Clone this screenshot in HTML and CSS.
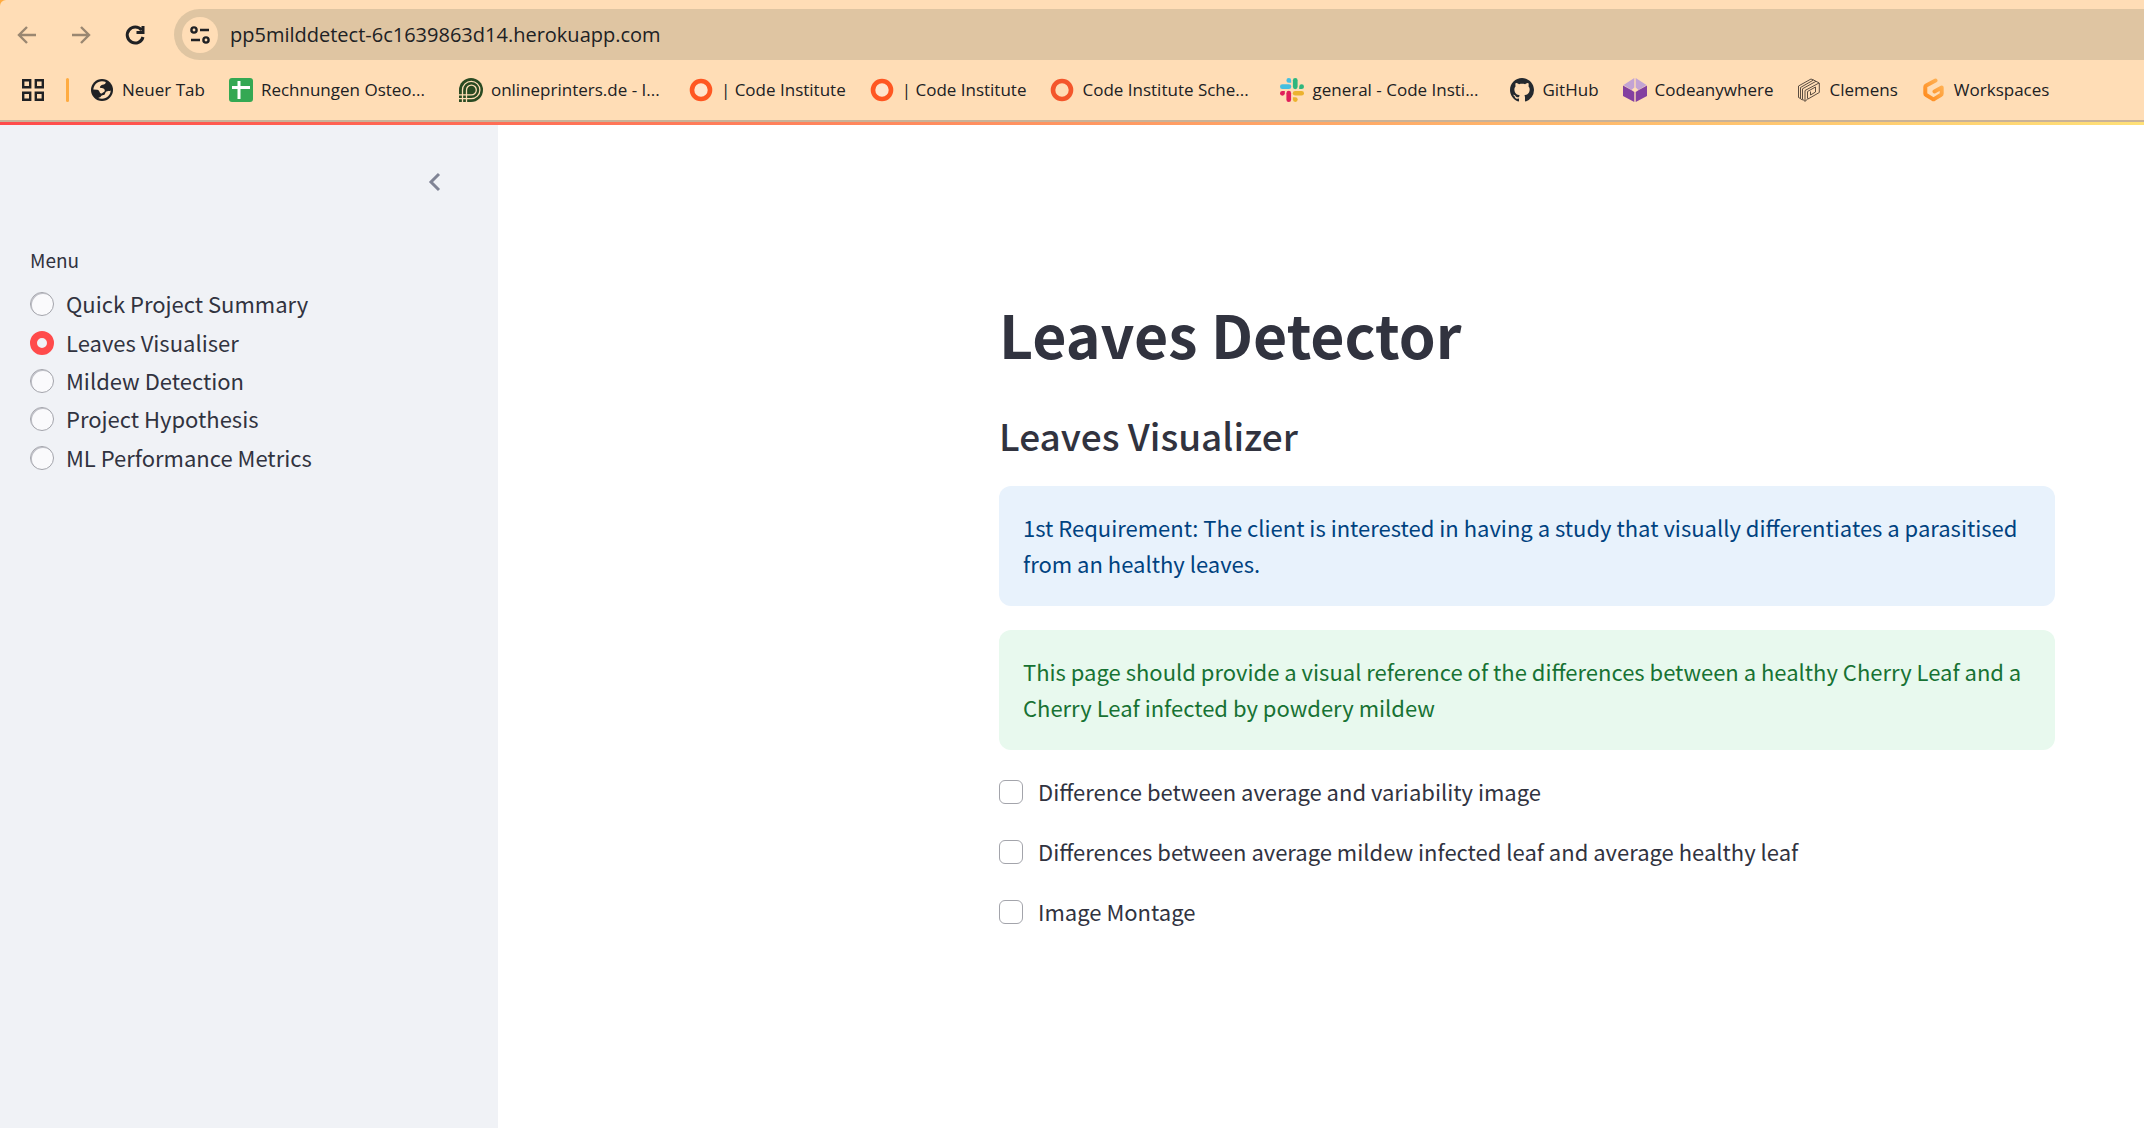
FILE: index.html
```
<!DOCTYPE html>
<html lang="en">
<head>
<meta charset="utf-8">
<title>Leaves Detector</title>
<link rel="stylesheet" href="styles.css">
</head>
<body>
<header class="browser">
  <div class="toolbar">
    <button class="nav-button nav-button--muted" type="button" aria-label="Back">
      <svg viewBox="0 0 24 24" width="24" height="24"><path d="M21 12H4M12 4l-8 8 8 8"/></svg>
    </button>
    <button class="nav-button nav-button--muted" type="button" aria-label="Forward">
      <svg viewBox="0 0 24 24" width="24" height="24"><path d="M3 12h17M12 4l8 8-8 8"/></svg>
    </button>
    <button class="nav-button" type="button" aria-label="Reload">
      <svg class="icon-bold" viewBox="0 0 24 24" width="24" height="24"><path d="M18.500 7A8 8 0 1 0 20 14M20 3v6.500h-6.500"/></svg>
    </button>
    <div class="omnibox">
      <button class="site-info" type="button" aria-label="Site information">
        <svg viewBox="0 0 24 24" width="24" height="24"><circle cx="6" cy="7" r="2.600"/><path d="M12 7h9M3 17h9"/><circle cx="18" cy="17" r="2.600"/></svg>
      </button>
      <input class="address" type="text" aria-label="Address" value="pp5milddetect-6c1639863d14.herokuapp.com">
    </div>
  </div>
  <nav class="bookmarks" aria-label="Bookmarks">
    <button class="apps" type="button" aria-label="Apps">
      <svg viewBox="0 0 24 24" width="24" height="24"><path d="M2.200 2.200h7v7h-7zM14.800 2.200h7v7h-7zM2.200 14.800h7v7h-7zM14.800 14.800h7v7h-7z"/></svg>
    </button>
    <span class="divider"></span>
    <a class="bookmark" href="#">
      <svg viewBox="0 0 24 24" width="24" height="24"><circle cx="12" cy="12" r="11" fill="#202124"/><path d="M3.300 11.500C3.700 7 7 3.500 12 3.200c1.500 0 2.800.3 3.800.8-.2 1.800-1.300 2.600-3.300 2.700-1.400.1-1.600 1.200-2.400 1.800-.8.600.2 1.500 1.400 1.600 2 .1 3.300 1 3.300 2.600 0 1.400-1.700 1.200-2.400 2.200-.8 1.100-2 .9-2.600-.4-.5-1.200-1-2.500-2.600-2.700zM20.700 12.500c-.2 4.500-3.700 8.200-8.700 8.300-1.500 0-2.700-.3-3.800-.8 1.500-.3 2.400-.9 3-1.900.6-1.100 2.300-.5 3.200-1.400 1-.9.700-2.400 2-3.200 1.100-.6 3-.1 4.300-1z" fill="#ffddb6"/></svg>
      <span class="bookmark-label">Neuer Tab</span>
    </a>
    <a class="bookmark" href="#">
      <svg viewBox="0 0 24 24" width="24" height="24"><rect width="24" height="24" rx="3" fill="#34a853"/><path d="M10 3v18M3 9.500h18" stroke="#fff" stroke-width="3"/></svg>
      <span class="bookmark-label bookmark-label--cut">Rechnungen Osteo...</span>
    </a>
    <a class="bookmark" href="#">
      <svg viewBox="0 0 24 24" width="24" height="24"><path d="M0 24V12a12 12 0 1 1 12 12z" fill="#2a4a22"/><path d="M3.500 24V12a8.700 8.700 0 1 1 8.700 8.700H0M7.500 24V12a4.900 4.900 0 1 1 4.900 4.900H0" fill="none" stroke="#ffddb6" stroke-width="1.300"/></svg>
      <span class="bookmark-label bookmark-label--cut">onlineprinters.de - I...</span>
    </a>
    <a class="bookmark" href="#">
      <svg viewBox="0 0 24 24" width="24" height="24"><circle cx="12" cy="12" r="9" fill="#ffe5cd" stroke="#ff5722" stroke-width="4.600"/></svg>
      <span class="bookmark-label">| Code Institute</span>
    </a>
    <a class="bookmark" href="#">
      <svg viewBox="0 0 24 24" width="24" height="24"><circle cx="12" cy="12" r="9" fill="#ffe5cd" stroke="#ff5722" stroke-width="4.600"/></svg>
      <span class="bookmark-label">| Code Institute</span>
    </a>
    <a class="bookmark" href="#">
      <svg viewBox="0 0 24 24" width="24" height="24"><circle cx="12" cy="12" r="9" fill="none" stroke="#f4562b" stroke-width="4.600"/></svg>
      <span class="bookmark-label bookmark-label--cut">Code Institute Sche...</span>
    </a>
    <a class="bookmark" href="#">
      <svg viewBox="0 0 24 24" width="24" height="24">
        <g fill="#45bfe0"><rect x="0" y="6.300" width="11.300" height="4.700" rx="2.350"/><path d="M11.200 4.800H8.800A2.400 2.400 0 1 1 11.200 2.400z"/></g>
        <g fill="#2eb67d"><rect x="12.900" y="0" width="4.700" height="11.200" rx="2.350"/><path d="M19.200 11.100V8.700a2.400 2.400 0 1 1 2.400 2.400z"/></g>
        <g fill="#ecb22e"><rect x="12.800" y="12.900" width="11.200" height="4.700" rx="2.350"/><path d="M12.900 19.200h2.400a2.400 2.400 0 1 1-2.400 2.400z"/></g>
        <g fill="#e01e5a"><rect x="6.400" y="12.800" width="4.700" height="11.200" rx="2.350"/><path d="M4.800 12.900v2.400a2.400 2.400 0 1 1-2.400-2.400z"/></g>
      </svg>
      <span class="bookmark-label bookmark-label--cut">general - Code Insti...</span>
    </a>
    <a class="bookmark" href="#">
      <svg viewBox="0 0 16 16" width="24" height="24"><path fill="#24292f" d="M8 0C3.580 0 0 3.580 0 8c0 3.540 2.290 6.530 5.470 7.590.4.070.55-.17.55-.38 0-.19-.01-.82-.01-1.490-2.010.37-2.530-.49-2.690-.94-.09-.23-.48-.94-.82-1.130-.28-.15-.68-.52-.01-.53.63-.01 1.080.58 1.230.82.72 1.210 1.870.87 2.330.66.07-.52.28-.87.51-1.070-1.780-.2-3.640-.89-3.640-3.950 0-.87.31-1.590.82-2.150-.08-.2-.36-1.020.08-2.120 0 0 .67-.21 2.200.82.64-.18 1.320-.27 2-.27s1.360.09 2 .27c1.530-1.040 2.200-.82 2.200-.82.44 1.100.16 1.920.08 2.120.51.56.82 1.270.82 2.150 0 3.070-1.870 3.750-3.650 3.950.29.25.54.73.54 1.480 0 1.070-.01 1.930-.01 2.200 0 .21.15.46.55.38A8.010 8.010 0 0 0 16 8c0-4.420-3.580-8-8-8z"/></svg>
      <span class="bookmark-label">GitHub</span>
    </a>
    <a class="bookmark" href="#">
      <svg viewBox="0 0 24 24" width="24" height="24"><path d="M11.300 0v9.500L8.500 12 .500 7zM12.700 0v9.500l2.800 2.500 8-5z" fill="#c3a3d4"/><path d="M0 7.500l9 5 2.300 1.500v10L0 18zM24 7.500l-9 5-2.300 1.500v10L24 18z" fill="#8440a0"/></svg>
      <span class="bookmark-label">Codeanywhere</span>
    </a>
    <a class="bookmark" href="#">
      <svg viewBox="0 0 24 24" width="24" height="24"><g fill="none" stroke="#5a4c40" stroke-width="1"><path d="M3.500 20.500l-2-1V8L14 1l2.500 1M5.500 22l-2-1.200V9.500L16.500 2l2.500 1.300M7.500 22.500l-2-1V10.800L19 3.300l3.300 1.700v9.500L11 21v-.5l-3 3V12.500L22 5M10.500 20.500v-7l8-4.500v5l-5 3v-3.500"/></g></svg>
      <span class="bookmark-label">Clemens</span>
    </a>
    <a class="bookmark" href="#">
      <svg viewBox="0 0 24 24" width="24" height="24"><defs><linearGradient id="workspace-fill" x1="1" y1="0" x2="0" y2="1"><stop offset="0" stop-color="#ffb55a"/><stop offset="1" stop-color="#ff8a1c"/></linearGradient></defs><path d="M13.500 2.500L4.200 7.500Q3.300 8 3.300 9v6.500q0 1 .9 1.500l6.400 3.900q.9.500 1.800 0l6.400-3.900q.9-.5.900-1.500v-6L12.500 13.500" fill="none" stroke="url(#workspace-fill)" stroke-width="4" stroke-linecap="round" stroke-linejoin="round"/></svg>
      <span class="bookmark-label">Workspaces</span>
    </a>
  </nav>
</header>
<div class="decoration"></div>
<div class="app">
  <aside class="sidebar">
    <button class="collapse" type="button" aria-label="Close sidebar">
      <svg viewBox="0 0 24 24" width="24" height="24"><path d="M16 4l-8 8 8 8"/></svg>
    </button>
    <fieldset class="menu">
      <legend class="menu-title">Menu</legend>
      <div class="menu-list">
        <label class="option"><input class="radio" type="radio" name="menu"><span class="label-text">Quick Project Summary</span></label>
        <label class="option"><input class="radio" type="radio" name="menu" checked><span class="label-text">Leaves Visualiser</span></label>
        <label class="option"><input class="radio" type="radio" name="menu"><span class="label-text">Mildew Detection</span></label>
        <label class="option"><input class="radio" type="radio" name="menu"><span class="label-text">Project Hypothesis</span></label>
        <label class="option"><input class="radio" type="radio" name="menu"><span class="label-text">ML Performance Metrics</span></label>
      </div>
    </fieldset>
  </aside>
  <main class="main">
    <div class="content">
      <h1 class="title">Leaves Detector</h1>
      <h2 class="subtitle">Leaves Visualizer</h2>
      <div class="stack">
        <p class="alert alert--info">1st Requirement: The client is interested in having a study that visually differentiates a parasitised from an healthy leaves.</p>
        <p class="alert alert--success">This page should provide a visual reference of the differences between a healthy Cherry Leaf and a Cherry Leaf infected by powdery mildew</p>
        <label class="check"><input class="checkbox" type="checkbox"><span class="label-text">Difference between average and variability image</span></label>
        <label class="check"><input class="checkbox" type="checkbox"><span class="label-text">Differences between average mildew infected leaf and average healthy leaf</span></label>
        <label class="check"><input class="checkbox" type="checkbox"><span class="label-text">Image Montage</span></label>
      </div>
    </div>
  </main>
</div>
</body>
</html>
```
FILE: styles.css
```
* {
  box-sizing: border-box;
}

body {
  margin: 0;
  min-height: 100vh;
  display: flex;
  flex-direction: column;
  overflow-x: hidden;
  background: #ffab40;
  color: #31333f;
  font-family: "Noto Sans CJK SC", "Noto Sans", sans-serif;
  font-size: 22px;
  line-height: 36px;
}

button {
  padding: 0;
  border: 0;
  background: none;
  color: inherit;
  cursor: pointer;
}

svg {
  display: block;
  flex: none;
}

/* Browser chrome */

.browser {
  overflow: hidden;
  border-bottom: 2px solid #c9b298;
  border-top-left-radius: 6px;
  background: #ffddb6;
  color: #202124;
  font-family: "Open Sans", "Noto Sans", sans-serif;
}

.toolbar {
  display: flex;
  align-items: center;
  gap: 18px;
  padding: 9px 0 0 9px;
}

.nav-button {
  display: grid;
  place-items: center;
  width: 36px;
  height: 36px;
}

.nav-button path,
.site-info path,
.site-info circle,
.apps path,
.collapse path {
  fill: none;
  stroke: currentColor;
  stroke-width: 2.400;
}

.nav-button .icon-bold path {
  stroke-width: 3;
}

.nav-button--muted {
  color: #9a8771;
}

.omnibox {
  flex: 1;
  display: flex;
  align-items: center;
  gap: 12px;
  height: 51px;
  margin-left: 3px;
  padding-left: 8px;
  border-radius: 26px 0 0 26px;
  background: #dfc5a2;
}

.site-info {
  display: grid;
  place-items: center;
  width: 36px;
  height: 36px;
  border-radius: 50%;
  background: #ffddb6;
}

.address {
  flex: 1;
  min-width: 0;
  padding: 0;
  border: 0;
  outline: 0;
  background: none;
  color: inherit;
  font-family: inherit;
  font-size: 20px;
  line-height: 28px;
}

.bookmarks {
  display: flex;
  align-items: center;
  height: 60px;
  padding-left: 21px;
  white-space: nowrap;
}

.divider {
  width: 3px;
  height: 24px;
  margin: 0 21px;
  border-radius: 2px;
  background: #ffab40;
}

.bookmark {
  display: flex;
  align-items: center;
  gap: 8px;
  margin-right: 24px;
  color: inherit;
  font-size: 17px;
  line-height: 24px;
  text-decoration: none;
}

.bookmark-label--cut {
  width: 174px;
}

/* Streamlit app */

.decoration {
  height: 3px;
  background: linear-gradient(90deg, #ff4b4b, #fffd80 119%);
}

.app {
  flex: 1;
  display: flex;
  background: #fff;
}

.sidebar {
  flex: none;
  width: 498px;
  padding: 39px 30px;
  background: #f0f2f6;
}

.collapse {
  display: grid;
  place-items: center;
  width: 36px;
  height: 36px;
  margin: 0 15px 0 auto;
  color: #808495;
}

.collapse path {
  stroke-width: 3;
}

.menu {
  margin: 45px 0 0;
  padding: 0;
  border: 0;
}

.menu-title {
  padding: 0;
  font-size: 19px;
  line-height: 30px;
}

.menu-list {
  display: grid;
  grid-auto-rows: 1fr;
  height: 192px;
  margin-top: 10px;
}

.option,
.check {
  display: flex;
  align-items: center;
  gap: 12px;
  cursor: pointer;
}

.label-text {
  padding-bottom: 2px;
  line-height: 34px;
}

.radio,
.checkbox {
  appearance: none;
  flex: none;
  width: 24px;
  height: 24px;
  margin: 0;
  border: 1px solid #a3a4ab;
}

.radio {
  border-radius: 50%;
  background: #fafafc;
  box-shadow: inset 1px 1px #c0c1c8;
}

.radio:checked {
  border: 7px solid #ff4b4b;
  background: #f0f2f6;
  box-shadow: none;
}

.main {
  flex: 1;
  padding: 169px 89px 60px 60px;
}

.content {
  max-width: 1056px;
  margin-left: auto;
}

.title {
  margin: 0;
  font-size: 59px;
  font-weight: 700;
  line-height: 80px;
}

.subtitle {
  margin: 36px 0 26px;
  font-size: 37px;
  font-weight: 500;
  line-height: 50px;
}

.stack {
  display: flex;
  flex-direction: column;
  gap: 24px;
}

.alert {
  margin: 0;
  padding: 23px 24px 25px;
  border-radius: 12px;
}

.alert--info {
  background: #e8f2fc;
  color: #004280;
}

.alert--success {
  background: #e8f9ee;
  color: #177233;
}

.check {
  gap: 15px;
}

.checkbox {
  border-radius: 6px;
  background: #fff;
}
```
